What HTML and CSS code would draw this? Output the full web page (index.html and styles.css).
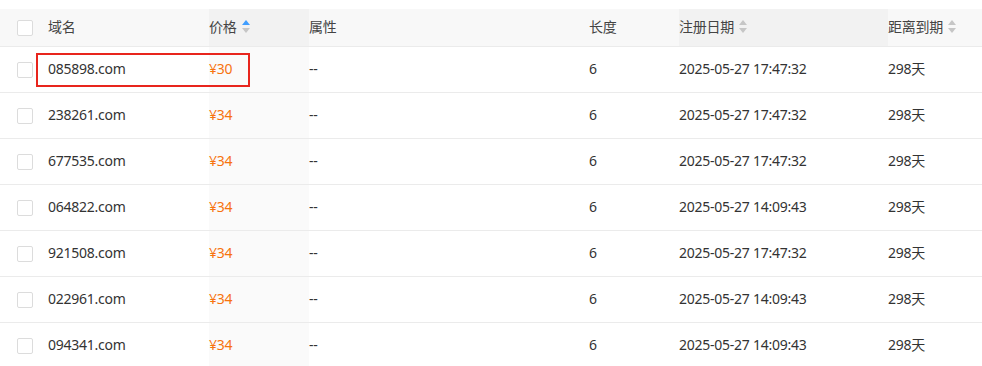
FILE: index.html
```html
<!DOCTYPE html>
<html lang="zh-CN">
<head>
<meta charset="utf-8">
<title>域名列表</title>
<link rel="stylesheet" href="styles.css">
</head>
<body>
<div class="wrap">
  <table class="grid">
    <colgroup>
      <col class="c-check"><col class="c-name"><col class="c-price"><col class="c-attr"><col class="c-len"><col class="c-date"><col class="c-left">
    </colgroup>
    <thead>
      <tr>
        <th class="check"><span class="box"></span></th>
        <th>域名</th>
        <th class="sorted">价格<span class="sort asc"><i class="up"></i><i class="down"></i></span></th>
        <th>属性</th>
        <th>长度</th>
        <th class="hover">注册日期<span class="sort"><i class="up"></i><i class="down"></i></span></th>
        <th>距离到期<span class="sort"><i class="up"></i><i class="down"></i></span></th>
      </tr>
    </thead>
    <tbody>
      <tr><td class="check"><span class="box"></span></td><td>085898.com</td><td class="price">¥30</td><td>--</td><td>6</td><td>2025-05-27 17:47:32</td><td>298天</td></tr>
      <tr><td class="check"><span class="box"></span></td><td>238261.com</td><td class="price">¥34</td><td>--</td><td>6</td><td>2025-05-27 17:47:32</td><td>298天</td></tr>
      <tr><td class="check"><span class="box"></span></td><td>677535.com</td><td class="price">¥34</td><td>--</td><td>6</td><td>2025-05-27 17:47:32</td><td>298天</td></tr>
      <tr><td class="check"><span class="box"></span></td><td>064822.com</td><td class="price">¥34</td><td>--</td><td>6</td><td>2025-05-27 14:09:43</td><td>298天</td></tr>
      <tr><td class="check"><span class="box"></span></td><td>921508.com</td><td class="price">¥34</td><td>--</td><td>6</td><td>2025-05-27 17:47:32</td><td>298天</td></tr>
      <tr><td class="check"><span class="box"></span></td><td>022961.com</td><td class="price">¥34</td><td>--</td><td>6</td><td>2025-05-27 14:09:43</td><td>298天</td></tr>
      <tr><td class="check"><span class="box"></span></td><td>094341.com</td><td class="price">¥34</td><td>--</td><td>6</td><td>2025-05-27 14:09:43</td><td>298天</td></tr>
    </tbody>
  </table>
  <div class="highlight"></div>
</div>
</body>
</html>
```
FILE: styles.css
```css
html, body {
  margin: 0;
  padding: 0;
  background: #fff;
}
body {
  font-family: "Noto Sans", "Noto Sans CJK SC", sans-serif;
  font-size: 14px;
  line-height: 20px;
  color: #333;
  overflow: hidden;
}
.wrap {
  position: relative;
  padding-top: 9px;
  width: 982px;
}
.grid {
  width: 982px;
  border-collapse: collapse;
  table-layout: fixed;
}
.c-check { width: 48px; }
.c-name { width: 161px; }
.c-price { width: 100px; }
.c-attr { width: 280px; }
.c-len { width: 90px; }
.c-date { width: 209px; }
.c-left { width: 94px; }

th, td {
  padding: 0 0 2px;
  text-align: left;
  white-space: nowrap;
  vertical-align: middle;
  letter-spacing: -0.25px;
}
thead th {
  height: 35px;
  background: #f8f8f8;
  font-weight: normal;
  color: #444;
  border-bottom: 1px solid #ebebeb;
}
thead th.sorted, thead th.hover {
  background: #f2f2f2;
}
tbody td {
  height: 43px;
  border-bottom: 1px solid #ebebeb;
  color: #333;
}
tbody td.price {
  background: #fafafa;
  color: #f7730e;
}
.box {
  display: block;
  margin-left: 17px;
  margin-top: 2px;
  width: 14px;
  height: 14px;
  border: 1px solid #dcdcdc;
  border-radius: 2px;
  background: #fff;
}
.sort {
  display: inline-flex;
  flex-direction: column;
  gap: 3px;
  vertical-align: middle;
  margin-left: 5px;
  position: relative;
  top: -1px;
}
.sort i {
  display: block;
  width: 0;
  height: 0;
  border-left: 4.5px solid transparent;
  border-right: 4.5px solid transparent;
}
.sort .up { border-bottom: 5px solid #c6c6c6; }
.sort .down { border-top: 5px solid #c6c6c6; }
.sort.asc .up { border-bottom-color: #409eff; }

.highlight {
  position: absolute;
  left: 36px;
  top: 53px;
  width: 210px;
  height: 30px;
  border: 2px solid #e8251d;
}
```
